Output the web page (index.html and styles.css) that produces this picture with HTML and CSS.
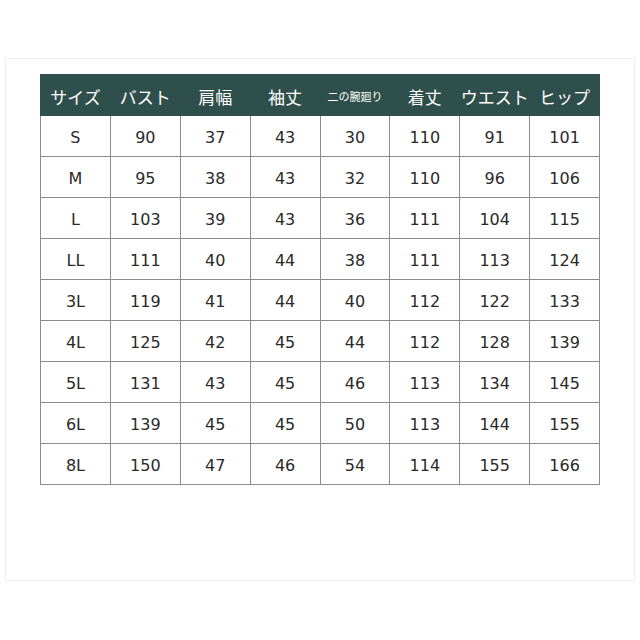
FILE: index.html
```html
<!DOCTYPE html>
<html lang="ja">
<head>
<meta charset="utf-8">
<link rel="stylesheet" href="styles.css">
</head>
<body>
<div class="card">
<table class="size-table">
<thead>
<tr><th>サイズ</th><th>バスト</th><th>肩幅</th><th>袖丈</th><th class="small">二の腕廻り</th><th>着丈</th><th>ウエスト</th><th>ヒップ</th></tr>
</thead>
<tbody>
<tr><td>S</td><td>90</td><td>37</td><td>43</td><td>30</td><td>110</td><td>91</td><td>101</td></tr>
<tr><td>M</td><td>95</td><td>38</td><td>43</td><td>32</td><td>110</td><td>96</td><td>106</td></tr>
<tr><td>L</td><td>103</td><td>39</td><td>43</td><td>36</td><td>111</td><td>104</td><td>115</td></tr>
<tr><td>LL</td><td>111</td><td>40</td><td>44</td><td>38</td><td>111</td><td>113</td><td>124</td></tr>
<tr><td>3L</td><td>119</td><td>41</td><td>44</td><td>40</td><td>112</td><td>122</td><td>133</td></tr>
<tr><td>4L</td><td>125</td><td>42</td><td>45</td><td>44</td><td>112</td><td>128</td><td>139</td></tr>
<tr><td>5L</td><td>131</td><td>43</td><td>45</td><td>46</td><td>113</td><td>134</td><td>145</td></tr>
<tr><td>6L</td><td>139</td><td>45</td><td>45</td><td>50</td><td>113</td><td>144</td><td>155</td></tr>
<tr><td>8L</td><td>150</td><td>47</td><td>46</td><td>54</td><td>114</td><td>155</td><td>166</td></tr>
</tbody>
</table>
</div>
</body>
</html>
```
FILE: styles.css
```css
html, body {
  margin: 0;
  padding: 0;
  background: #ffffff;
}
.card {
  box-sizing: border-box;
  margin: 58px 0 0 5px;
  width: 630px;
  height: 523px;
  border: 1px solid #efefef;
  padding: 15px 0 0 34px;
}
.size-table {
  border-collapse: collapse;
  table-layout: fixed;
  width: 560px;
  font-family: "DejaVu Sans", "Noto Sans CJK JP", sans-serif;
}
.size-table th,
.size-table td {
  height: 41px;
  padding: 0;
  text-align: center;
  vertical-align: middle;
  box-sizing: border-box;
}
.size-table th {
  background: #2e4f4b;
  color: #ffffff;
  font-family: "Noto Sans CJK JP", sans-serif;
  font-weight: 400;
  font-size: 17px;
  padding-top: 2px;
  border: 1px solid #2e4f4b;
}
.size-table th.small {
  font-size: 11px;
}
.size-table td {
  color: #2a2a2a;
  font-size: 16px;
  padding-top: 3px;
  border: 1px solid #8c8c8c;
}
```
